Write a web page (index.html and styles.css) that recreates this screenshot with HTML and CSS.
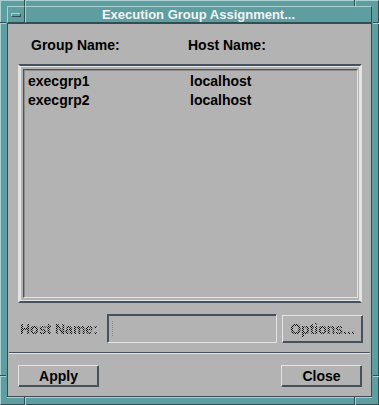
FILE: index.html
```html
<!DOCTYPE html>
<html>
<head>
<meta charset="utf-8">
<link rel="stylesheet" href="styles.css">
</head>
<body>
<div class="window">
  <span class="notch v top l"></span><span class="notch v top r"></span>
  <span class="notch v bottom l"></span><span class="notch v bottom r"></span>
  <span class="notch h left t"></span><span class="notch h left b"></span>
  <span class="notch h right t"></span><span class="notch h right b"></span>
  <div class="titlebar">
    <div class="menu-btn"><span class="menu-icon"></span></div>
    <div class="title">Execution Group Assignment...</div>
  </div>
  <div class="content">
    <div class="headers">
      <span class="col-group">Group Name:</span>
      <span class="col-host">Host Name:</span>
    </div>
    <div class="list-frame">
      <div class="list">
        <div class="row"><span>execgrp1</span><span>localhost</span></div>
        <div class="row"><span>execgrp2</span><span>localhost</span></div>
      </div>
    </div>
    <div class="host-row">
      <span class="host-label stipple">Host Name:</span>
      <div class="field"><span class="cursor"></span></div>
      <div class="btn options"><span class="stipple">Options...</span></div>
    </div>
    <div class="separator"></div>
    <div class="actions">
      <div class="btn action">Apply</div>
      <div class="btn action">Close</div>
    </div>
  </div>
</div>
</body>
</html>
```

FILE: styles.css
```css
body {
  margin: 0;
  background: #5f9ea0;
}

.window {
  position: relative;
  width: 379px;
  height: 405px;
  box-sizing: border-box;
  background: #5f9ea0;
  border: 1px solid;
  border-color: #a9d1d1 #2f4f52 #2f4f52 #a9d1d1;
  padding: 5px 6px 7px 6px;
  display: flex;
  flex-direction: column;
  font-family: "Liberation Sans", Arial, sans-serif;
  font-weight: bold;
  font-size: 14px;
  color: #000;
}

.notch {
  position: absolute;
  box-sizing: border-box;
}
.notch.v {
  width: 2px;
  height: 6px;
  border-left: 1px solid #2f4f52;
  background: #a9d1d1;
}
.notch.v.top { top: -1px; }
.notch.v.bottom { bottom: -1px; height: 8px; }
.notch.v.l { left: 23px; }
.notch.v.r { left: 353px; }
.notch.h {
  width: 6px;
  height: 2px;
  border-top: 1px solid #2f4f52;
  background: #a9d1d1;
}
.notch.h.left { left: -1px; }
.notch.h.right { right: -1px; }
.notch.h.t { top: 21px; }
.notch.h.b { top: 374px; }

.titlebar {
  display: flex;
  height: 17px;
}

.menu-btn {
  width: 18px;
  box-sizing: border-box;
  border: 1px solid;
  border-color: #a9d1d1 #2f4f52 #2f4f52 #a9d1d1;
  display: flex;
  align-items: center;
  justify-content: center;
}

.menu-icon {
  width: 10px;
  height: 4px;
  box-sizing: border-box;
  border: 1px solid;
  border-color: #a9d1d1 #2f4f52 #2f4f52 #a9d1d1;
}

.title {
  flex: 1;
  box-sizing: border-box;
  border: 1px solid;
  border-color: #a9d1d1 #2f4f52 #2f4f52 #a9d1d1;
  color: #f4f4f4;
  font-size: 13px;
  line-height: 15px;
  text-align: center;
}

.content {
  flex: 1;
  background: #b3b3b3;
  box-sizing: border-box;
  border: 1px solid;
  border-color: #2f4f52 #3e4a56 #3e4a56 #2f4f52;
  box-shadow: 0 1px 0 #a9d1d1;
  display: flex;
  flex-direction: column;
}

.headers {
  display: flex;
  padding: 13px 0 0 23px;
  line-height: 16px;
}
.col-group { width: 157px; }

.list-frame {
  margin: 11px 0 0 10px;
  width: 344px;
  height: 239px;
  box-sizing: border-box;
  border: 2px solid;
  border-color: #45515d #e4e4e4 #45515d #e4e4e4;
  border-top-color: #45515d;
  box-shadow: inset 1px 1px 0 #e4e4e4, inset -1px -1px 0 #e4e4e4;
  padding: 3px 2px 3px 3px;
}

.list {
  height: 100%;
  box-sizing: border-box;
  border: 1px solid;
  border-color: #45515d #e4e4e4 #e4e4e4 #45515d;
  box-shadow: inset 1px 1px 0 #8e8e8e;
  padding: 2px 0 0 4px;
}

.row {
  display: grid;
  grid-template-columns: 162px 1fr;
  line-height: 19px;
}

.stipple {
  color: transparent;
  background: repeating-conic-gradient(#000 0 25%, transparent 0 50%) 0 0 / 2px 2px;
  -webkit-background-clip: text;
  background-clip: text;
}

.host-row {
  display: flex;
  align-items: flex-start;
  margin: 11px 0 0 12px;
}

.host-label {
  width: 87px;
  line-height: 16px;
  margin-top: 7px;
}

.field {
  width: 170px;
  height: 29px;
  box-sizing: border-box;
  border: 1px solid;
  border-color: #45515d #e4e4e4 #e4e4e4 #45515d;
  box-shadow: inset 1px 1px 0 #45515d;
  padding: 6px 0 0 4px;
}

.cursor {
  display: block;
  width: 1px;
  height: 15px;
  border-left: 1px dotted #8a8a8a;
}

.btn {
  box-sizing: border-box;
  border: 1px solid;
  border-color: #e4e4e4 #45515d #45515d #e4e4e4;
  box-shadow: inset -1px -1px 0 #45515d;
  display: flex;
  align-items: center;
  justify-content: center;
}

.options {
  width: 81px;
  height: 28px;
  margin: 1px 0 0 5px;
}

.separator {
  margin: 9px 1px 0 1px;
  border-top: 1px solid #45515d;
  border-bottom: 1px solid #e4e4e4;
  height: 0;
}

.actions {
  display: flex;
  justify-content: space-between;
  padding: 11px 9px 0 10px;
}

.action {
  width: 81px;
  height: 22px;
}
```
